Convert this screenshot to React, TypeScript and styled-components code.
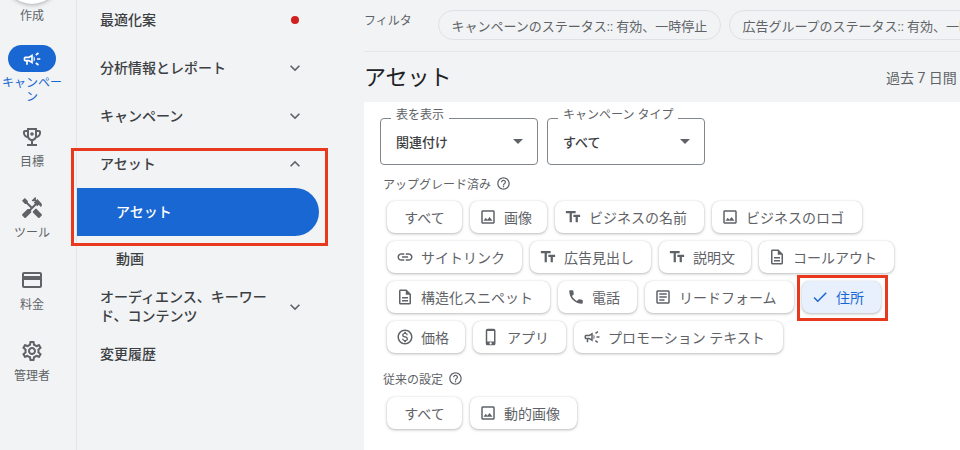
import styled, { createGlobalStyle } from 'styled-components';
import type { ComponentType } from 'react';
import {
  MdArrowDropDown,
  MdCheck,
  MdExpandLess,
  MdExpandMore,
  MdHandyman,
  MdHelpOutline,
  MdLink,
  MdOutlineArticle,
  MdOutlineCampaign,
  MdOutlineCreditCard,
  MdOutlineDescription,
  MdOutlineImage,
  MdOutlineMonetizationOn,
  MdOutlinePhoneIphone,
  MdOutlineSettings,
  MdPhone,
  MdTextFields,
} from 'react-icons/md';

const GlobalStyle = createGlobalStyle`
  html, body {
    margin: 0;
    padding: 0;
    width: 960px;
    height: 450px;
    overflow: hidden;
    background: #f1f3f4;
    font-family: Roboto, "Noto Sans CJK JP", sans-serif;
    color: #3c4043;
  }
`;

const Page = styled.div`
  position: relative;
  display: flex;
  width: 960px;
  height: 450px;
  overflow: hidden;
`;

const Rail = styled.nav`
  flex: none;
  width: 64px;
  height: 450px;
  padding-right: 12px;
  border-right: 1px solid #e3e5e7;
  display: flex;
  flex-direction: column;
  align-items: center;
  overflow: hidden;
`;

const CreateCircle = styled.div`
  flex: none;
  width: 56px;
  height: 56px;
  margin-top: -52px;
  border-radius: 50%;
  background: #fff;
  box-shadow: 0 1px 4px rgba(60, 64, 67, 0.4);
`;

const RailItem = styled.div<{ $height: number }>`
  flex: none;
  width: 64px;
  height: ${(p) => p.$height}px;
  display: flex;
  flex-direction: column;
  align-items: center;
`;

const CreateLabel = styled.div`
  margin-top: 4px;
  font-size: 12px;
  line-height: 17px;
  text-align: center;
  color: #5f6368;
`;

const RailIcon = styled.div`
  height: 27px;
  display: flex;
  align-items: center;
  justify-content: center;
  color: #5f6368;
  font-size: 24px;
`;

const RailPill = styled.div`
  width: 48px;
  height: 27px;
  border-radius: 14px;
  background: #1967d2;
  color: #fff;
  font-size: 20px;
  display: flex;
  align-items: center;
  justify-content: center;
`;

const RailLabel = styled.div<{ $active?: boolean }>`
  width: 64px;
  margin-top: ${(p) => (p.$active ? 4 : 5)}px;
  font-size: 12px;
  line-height: 14px;
  text-align: center;
  word-break: break-all;
  color: ${(p) => (p.$active ? '#1967d2' : '#5f6368')};
`;

const NavPanel = styled.div`
  flex: none;
  width: 273px;
  height: 454px;
  margin-top: -4px;
`;

const NavRow = styled.div<{ $height?: number }>`
  height: ${(p) => p.$height ?? 48}px;
  display: flex;
  align-items: center;
  justify-content: space-between;
  padding: 0 54px 0 23px;
  font-size: 14px;
  line-height: 19px;
  font-weight: 500;
  color: #3c4043;
`;

const NavText = styled.span`
  width: 172px;
`;

const NavChevron = styled.span`
  display: flex;
  color: #5f6368;
  font-size: 20px;
  margin-right: -9px;
`;

const Dot = styled.span`
  width: 8px;
  height: 8px;
  border-radius: 50%;
  background: #d01f1f;
  margin-right: -3px;
`;

const SelectedRow = styled.div`
  width: 242px;
  height: 48px;
  padding: 0 0 3px 39px;
  box-sizing: border-box;
  display: flex;
  align-items: center;
  border-radius: 0 24px 24px 0;
  background: #1967d2;
  color: #fff;
  font-size: 14px;
  font-weight: 500;
`;

const SubRow = styled.div`
  height: 48px;
  padding: 0 0 4px 39px;
  box-sizing: border-box;
  display: flex;
  align-items: center;
  font-size: 14px;
  font-weight: 500;
  color: #3c4043;
`;

const Main = styled.main`
  flex: 1;
  min-width: 0;
  height: 450px;
  padding-left: 14px;
  display: flex;
  flex-direction: column;
`;

const FilterBar = styled.div`
  flex: none;
  height: 52px;
  box-sizing: border-box;
  padding-top: 10px;
  display: flex;
  align-items: flex-start;
  gap: 8px;
  border-bottom: 1px solid #e4e6e8;
  white-space: nowrap;
`;

const FilterLabel = styled.div`
  flex: none;
  width: 66px;
  margin-top: 2px;
  font-size: 12px;
  line-height: 18px;
  color: #5f6368;
`;

const FilterChip = styled.div`
  flex: none;
  height: 30px;
  box-sizing: border-box;
  padding: 0 12.5px;
  display: flex;
  align-items: center;
  border: 1px solid #dfe1e5;
  border-radius: 15px;
  font-size: 13px;
  color: #5f6368;
`;

const TitleRow = styled.div`
  flex: none;
  height: 50px;
  display: flex;
  align-items: center;
  justify-content: space-between;
  white-space: nowrap;
`;

const Title = styled.h1`
  margin: 0 0 4px;
  font-size: 22px;
  font-weight: 400;
  color: #202124;
`;

const DateRange = styled.div`
  width: 74px;
  margin-bottom: 1px;
  font-size: 14px;
  color: #5f6368;
`;

const Card = styled.section`
  flex: 1;
  background: #fff;
  padding: 16px 16px 0;
`;

const SelectGroup = styled.div`
  display: flex;
  gap: 9px;
`;

const SelectBox = styled.div`
  position: relative;
  width: 158px;
  height: 47px;
  box-sizing: border-box;
  padding: 0 15px 1px;
  display: flex;
  align-items: center;
  justify-content: space-between;
  border: 1px solid #80868b;
  border-radius: 4px;
  font-size: 13px;
  font-weight: 500;
  color: #3c4043;
`;

const SelectLabel = styled.span`
  position: absolute;
  left: 10px;
  top: -12px;
  padding: 0 5px;
  background: #fff;
  font-size: 12px;
  font-weight: 400;
  line-height: 16px;
  color: #5f6368;
`;

const SelectCaret = styled.span`
  display: flex;
  font-size: 24px;
  color: #5f6368;
  margin-right: -8px;
`;

const SectionLabel = styled.div<{ $top: number }>`
  display: flex;
  align-items: center;
  gap: 5px;
  height: 18px;
  margin: ${(p) => p.$top}px 0 0 3px;
  font-size: 12px;
  color: #5f6368;

  svg {
    font-size: 15px;
  }
`;

const ChipGrid = styled.div<{ $top: number }>`
  display: flex;
  flex-direction: column;
  gap: 8px;
  margin: ${(p) => p.$top}px 0 0 7px;
`;

const ChipRow = styled.div`
  display: flex;
  gap: 8px;
`;

const Chip = styled.div<{ $width: number; $selected?: boolean; $hasIcon: boolean }>`
  flex: none;
  width: ${(p) => p.$width}px;
  height: 32px;
  box-sizing: border-box;
  padding-left: ${(p) => (p.$hasIcon ? 9 : 0)}px;
  display: flex;
  align-items: center;
  justify-content: ${(p) => (p.$hasIcon ? 'flex-start' : 'center')};
  gap: 7px;
  border-radius: 8px;
  font-size: 14px;
  white-space: nowrap;
  color: ${(p) => (p.$selected ? '#1967d2' : '#5f6368')};
  background: ${(p) => (p.$selected ? '#e8f0fe' : '#fff')};
  box-shadow: 0 1px 3px rgba(60, 64, 67, 0.35), 0 0 1px rgba(60, 64, 67, 0.2);

  svg {
    flex: none;
    font-size: 18px;
  }
`;

const Callout = styled.div<{ $left: number; $top: number; $width: number; $height: number }>`
  position: absolute;
  left: ${(p) => p.$left}px;
  top: ${(p) => p.$top}px;
  width: ${(p) => p.$width}px;
  height: ${(p) => p.$height}px;
  box-sizing: border-box;
  border: 3px solid #e8391f;
  pointer-events: none;
`;

// Material's outlined trophy has no medal dot in the cup, so it is drawn here
const TrophyIcon = () => (
  <svg width="24" height="24" viewBox="0 0 24 24" fill="currentColor">
    <path d="M19 5h-2V3H7v2H5c-1.1 0-2 .9-2 2v1c0 2.55 1.92 4.63 4.39 4.94.63 1.5 1.98 2.63 3.61 2.96V19H7v2h10v-2h-4v-3.1c1.63-.33 2.98-1.46 3.61-2.96C19.08 12.63 21 10.55 21 8V7c0-1.1-.9-2-2-2zM5 8V7h2v3.82C5.84 10.4 5 9.3 5 8zm7 6c-1.65 0-3-1.35-3-3V5h6v6c0 1.65-1.35 3-3 3zm7-6c0 1.3-.84 2.4-2 2.82V7h2v1z" />
    <circle cx="12" cy="9" r="1.8" />
  </svg>
);

type ChipData = { label: string; width: number; icon?: ComponentType; selected?: boolean };

const chipRows: ChipData[][] = [
  [
    { label: 'すべて', width: 75 },
    { label: '画像', width: 77, icon: MdOutlineImage },
    { label: 'ビジネスの名前', width: 149, icon: MdTextFields },
    { label: 'ビジネスのロゴ', width: 150, icon: MdOutlineImage },
  ],
  [
    { label: 'サイトリンク', width: 135, icon: MdLink },
    { label: '広告見出し', width: 121, icon: MdTextFields },
    { label: '説明文', width: 92, icon: MdTextFields },
    { label: 'コールアウト', width: 135, icon: MdOutlineDescription },
  ],
  [
    { label: '構造化スニペット', width: 163, icon: MdOutlineDescription },
    { label: '電話', width: 79, icon: MdPhone },
    { label: 'リードフォーム', width: 149, icon: MdOutlineArticle },
    { label: '住所', width: 79, icon: MdCheck, selected: true },
  ],
  [
    { label: '価格', width: 78, icon: MdOutlineMonetizationOn },
    { label: 'アプリ', width: 93, icon: MdOutlinePhoneIphone },
    { label: 'プロモーション テキスト', width: 209, icon: MdOutlineCampaign },
  ],
];

const legacyChips: ChipData[] = [
  { label: 'すべて', width: 75 },
  { label: '動的画像', width: 107, icon: MdOutlineImage },
];

const renderChip = (chip: ChipData) => {
  const Icon = chip.icon;
  return (
    <Chip key={chip.label} $width={chip.width} $selected={chip.selected} $hasIcon={!!Icon}>
      {Icon && <Icon />}
      {chip.label}
    </Chip>
  );
};

const App = () => {
  return (
    <Page>
      <GlobalStyle />
      <Rail>
        <CreateCircle />
        <RailItem $height={41}>
          <CreateLabel>作成</CreateLabel>
        </RailItem>
        <RailItem $height={78}>
          <RailPill>
            <MdOutlineCampaign />
          </RailPill>
          <RailLabel $active>キャンペーン</RailLabel>
        </RailItem>
        <RailItem $height={71}>
          <RailIcon>
            <TrophyIcon />
          </RailIcon>
          <RailLabel>目標</RailLabel>
        </RailItem>
        <RailItem $height={72}>
          <RailIcon>
            <MdHandyman />
          </RailIcon>
          <RailLabel>ツール</RailLabel>
        </RailItem>
        <RailItem $height={71}>
          <RailIcon>
            <MdOutlineCreditCard />
          </RailIcon>
          <RailLabel>料金</RailLabel>
        </RailItem>
        <RailItem $height={60}>
          <RailIcon>
            <MdOutlineSettings />
          </RailIcon>
          <RailLabel>管理者</RailLabel>
        </RailItem>
      </Rail>

      <NavPanel>
        <NavRow>
          最適化案
          <Dot />
        </NavRow>
        <NavRow>
          分析情報とレポート
          <NavChevron>
            <MdExpandMore />
          </NavChevron>
        </NavRow>
        <NavRow>
          キャンペーン
          <NavChevron>
            <MdExpandMore />
          </NavChevron>
        </NavRow>
        <NavRow>
          アセット
          <NavChevron>
            <MdExpandLess />
          </NavChevron>
        </NavRow>
        <SelectedRow>アセット</SelectedRow>
        <SubRow>動画</SubRow>
        <NavRow $height={46}>
          <NavText>オーディエンス、キーワード、コンテンツ</NavText>
          <NavChevron>
            <MdExpandMore />
          </NavChevron>
        </NavRow>
        <NavRow>変更履歴</NavRow>
      </NavPanel>

      <Main>
        <FilterBar>
          <FilterLabel>フィルタ</FilterLabel>
          <FilterChip>キャンペーンのステータス:: 有効、一時停止</FilterChip>
          <FilterChip>広告グループのステータス:: 有効、一時停止</FilterChip>
        </FilterBar>
        <TitleRow>
          <Title>アセット</Title>
          <DateRange>過去 7 日間</DateRange>
        </TitleRow>
        <Card>
          <SelectGroup>
            <SelectBox>
              <SelectLabel>表を表示</SelectLabel>
              関連付け
              <SelectCaret>
                <MdArrowDropDown />
              </SelectCaret>
            </SelectBox>
            <SelectBox>
              <SelectLabel>キャンペーン タイプ</SelectLabel>
              すべて
              <SelectCaret>
                <MdArrowDropDown />
              </SelectCaret>
            </SelectBox>
          </SelectGroup>
          <SectionLabel $top={9}>
            アップグレード済み
            <MdHelpOutline />
          </SectionLabel>
          <ChipGrid $top={9}>
            {chipRows.map((row) => (
              <ChipRow key={row[0].label}>{row.map(renderChip)}</ChipRow>
            ))}
          </ChipGrid>
          <SectionLabel $top={16}>
            従来の設定
            <MdHelpOutline />
          </SectionLabel>
          <ChipGrid $top={10}>
            <ChipRow>{legacyChips.map(renderChip)}</ChipRow>
          </ChipGrid>
        </Card>
      </Main>

      <Callout $left={71} $top={148} $width={257} $height={98} />
      <Callout $left={797} $top={275} $width={91} $height={46} />
    </Page>
  );
};

export default App;
